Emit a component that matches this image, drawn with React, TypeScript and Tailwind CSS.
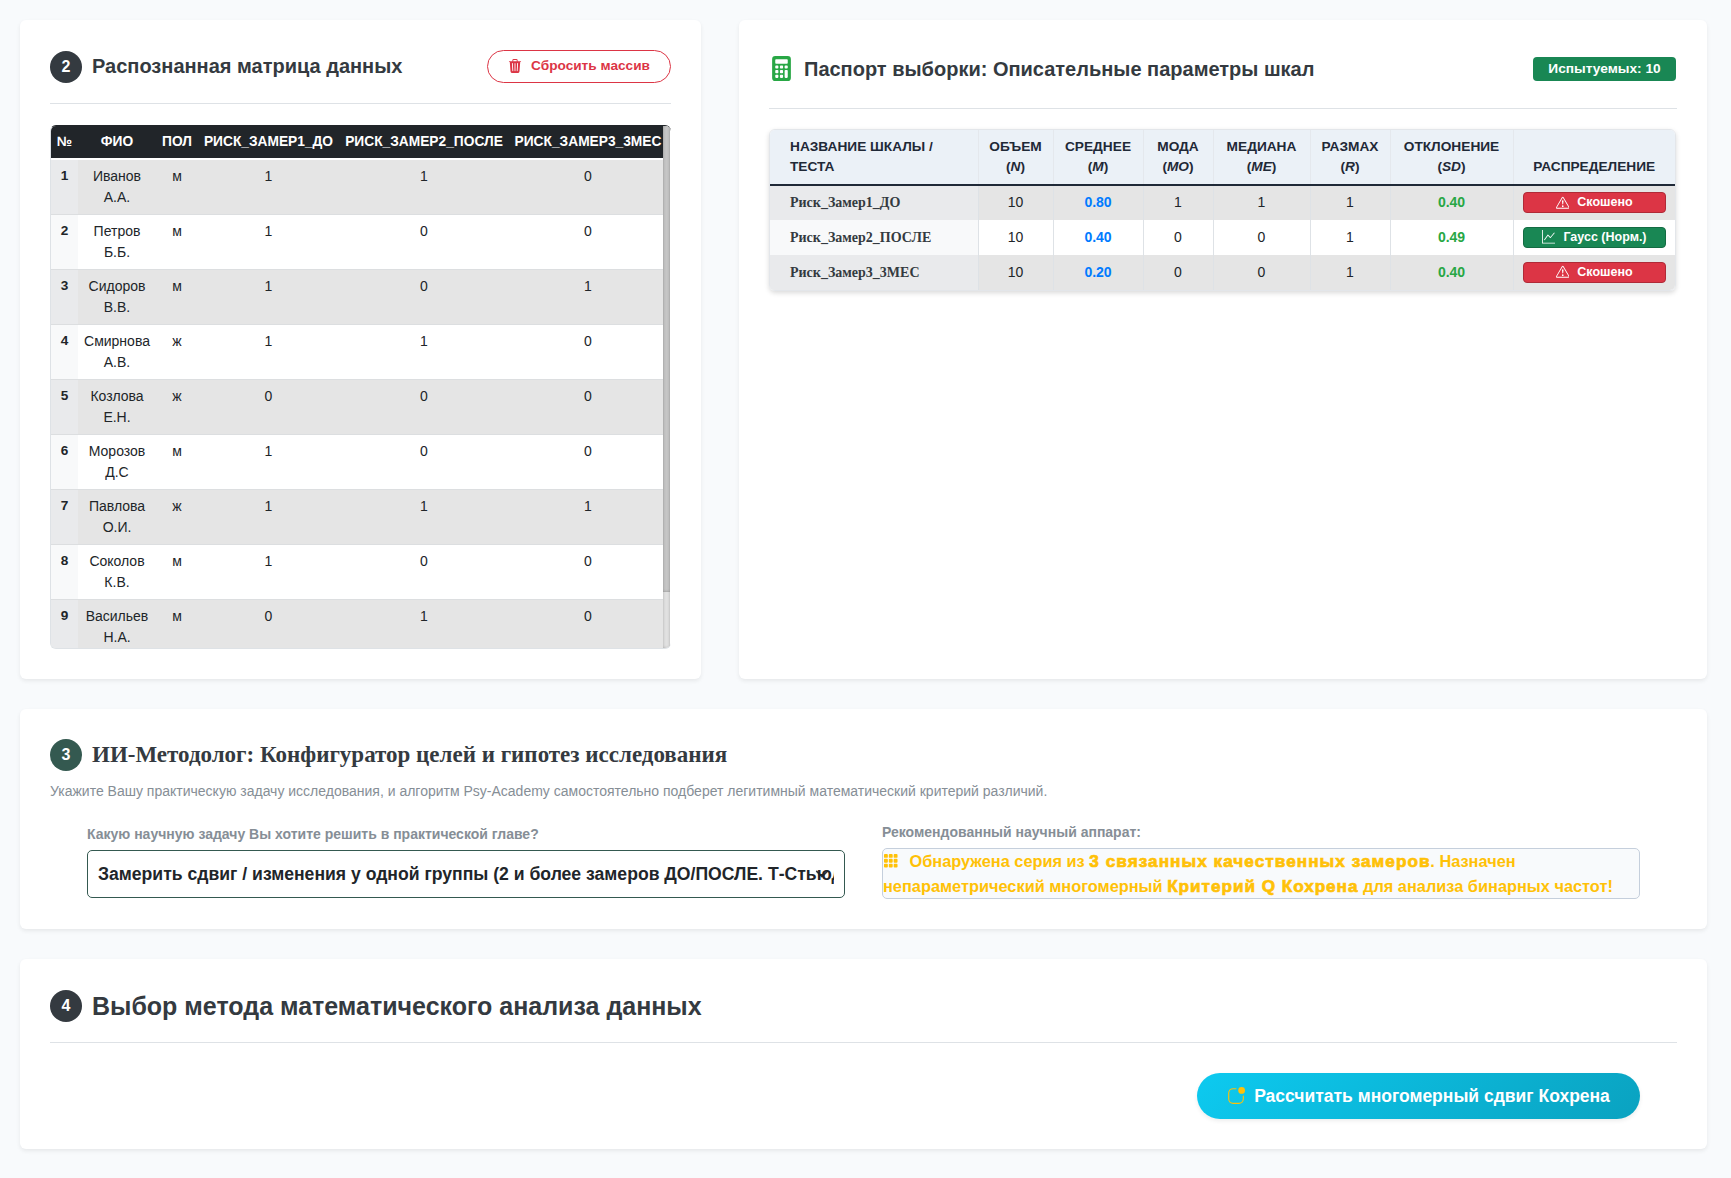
import type { ReactNode } from 'react';
import {
  BsAppIndicator,
  BsCalculatorFill,
  BsExclamationTriangle,
  BsGraphUp,
  BsGrid3X3GapFill,
  BsTrash3Fill,
} from 'react-icons/bs';

const people: [string, string, string, number, number, number][] = [
  ['Иванов', 'А.А.', 'м', 1, 1, 0],
  ['Петров', 'Б.Б.', 'м', 1, 0, 0],
  ['Сидоров', 'В.В.', 'м', 1, 0, 1],
  ['Смирнова', 'А.В.', 'ж', 1, 1, 0],
  ['Козлова', 'Е.Н.', 'ж', 0, 0, 0],
  ['Морозов', 'Д.С', 'м', 1, 0, 0],
  ['Павлова', 'О.И.', 'ж', 1, 1, 1],
  ['Соколов', 'К.В.', 'м', 1, 0, 0],
  ['Васильев', 'Н.А.', 'м', 0, 1, 0],
];

const scales = [
  { name: 'Риск_Замер1_ДО', mean: '0.80', mode: 1, median: 1, sd: '0.40', normal: false },
  { name: 'Риск_Замер2_ПОСЛЕ', mean: '0.40', mode: 0, median: 0, sd: '0.49', normal: true },
  { name: 'Риск_Замер3_3МЕС', mean: '0.20', mode: 0, median: 0, sd: '0.40', normal: false },
];

const statHeads = [
  ['ОБЪЕМ', 'N'],
  ['СРЕДНЕЕ', 'M'],
  ['МОДА', 'MO'],
  ['МЕДИАНА', 'ME'],
  ['РАЗМАХ', 'R'],
  ['ОТКЛОНЕНИЕ', 'SD'],
];

function Card({ className, children }: { className: string; children: ReactNode }) {
  return (
    <section className={`rounded-md bg-white px-[30px] shadow-[0_2px_4px_rgba(0,0,0,0.075)] ${className}`}>
      {children}
    </section>
  );
}

function Step({ n, className = 'bg-[#343a40]' }: { n: number; className?: string }) {
  return (
    <span
      className={`mr-[10px] flex size-8 shrink-0 items-center justify-center rounded-full text-base font-bold text-white ${className}`}
    >
      {n}
    </span>
  );
}

function MatrixCard() {
  return (
    <Card className="h-[659px] w-[681px] pt-[30px]">
      <header className="flex h-[54px] items-start justify-between border-b border-[#dee2e6]">
        <div className="flex h-[33px] items-center">
          <Step n={2} />
          <h2 className="pb-[2px] text-[20px] font-bold text-[#343a40]">Распознанная матрица данных</h2>
        </div>
        <button className="flex h-[33px] w-[184px] items-center justify-center rounded-full border border-[#dc3545] pb-px text-[13.65px] font-bold whitespace-nowrap text-[#dc3545]">
          <BsTrash3Fill className="mr-[9px] size-[14px]" />
          Сбросить массив
        </button>
      </header>
      <div className="mt-[21px] flex h-[524px] overflow-hidden rounded-md border border-r-0 border-[#dee2e6] border-t-[#212529]">
        <div className="w-[612px] overflow-hidden">
          <table className="w-[616px] table-fixed border-collapse text-center text-[14px] text-[#212529]">
            <colgroup>
              <col className="w-[27px]" />
              <col className="w-[78px]" />
              <col className="w-[42px]" />
              <col className="w-[141px]" />
              <col className="w-[170px]" />
              <col className="w-[158px]" />
            </colgroup>
            <thead>
              <tr className="h-[32px] bg-[#212529] text-[13.75px] font-bold text-white">
                <td>№</td>
                <td>ФИО</td>
                <td>ПОЛ</td>
                <td>РИСК_ЗАМЕР1_ДО</td>
                <td>РИСК_ЗАМЕР2_ПОСЛЕ</td>
                <td>РИСК_ЗАМЕР3_3МЕС</td>
              </tr>
              <tr className="h-0.5">
                <td colSpan={6} className="h-0.5 p-0" />
              </tr>
            </thead>
            <tbody>
              {people.map(([last, initials, sex, a, b, c], i) => (
                <tr
                  key={last}
                  className="h-[55px] border-b border-[#dcdee0] align-top leading-[21px] first:h-[54px] odd:bg-[#e5e5e5]"
                >
                  <td className={`pt-[5px] text-[13.6px] font-bold ${i % 2 ? 'bg-[#f8f9fa]' : 'bg-[#e9eaec]'}`}>
                    {i + 1}
                  </td>
                  <td className="pt-[6px]">
                    {last}
                    <br />
                    {initials}
                  </td>
                  <td className="pt-[6px]">{sex}</td>
                  <td className="pt-[6px]">{a}</td>
                  <td className="pt-[6px]">{b}</td>
                  <td className="pt-[6px]">{c}</td>
                </tr>
              ))}
            </tbody>
          </table>
        </div>
        <div className="-mt-px h-[523px] w-[7px] bg-[#e1e1e1] shadow-[inset_0_0_3px_rgba(0,0,0,0.25)]">
          <div className="h-[467px] bg-[#c6c6c6] shadow-[inset_0_0_3px_rgba(0,0,0,0.3)]" />
        </div>
      </div>
    </Card>
  );
}

function Verdict({ normal }: { normal: boolean }) {
  return normal ? (
    <span className="mx-auto flex h-[21px] w-[143px] items-center justify-center rounded border border-[#146c43] bg-[#198754] text-[12.5px] font-bold text-white">
      <BsGraphUp className="mr-2 size-[13.5px]" />
      Гаусс (Норм.)
    </span>
  ) : (
    <span className="mx-auto flex h-[21px] w-[143px] items-center justify-center rounded border border-[#b02a37] bg-[#dc3545] text-[12.5px] font-bold text-white">
      <BsExclamationTriangle className="mr-2 size-[13.5px]" />
      Скошено
    </span>
  );
}

function PassportCard() {
  return (
    <Card className="h-[659px] w-[968px] pt-[30px]">
      <header className="flex h-[59px] items-start justify-between border-b border-[#dee2e6] pt-[3px]">
        <div className="flex h-[31px] items-center">
          <BsCalculatorFill className="mr-[10px] size-[25px] text-[#28a745]" />
          <h2 className="text-[20px] font-bold text-[#343a40]">Паспорт выборки: Описательные параметры шкал</h2>
        </div>
        <span className="mt-[4px] mr-px flex h-6 w-[143px] items-center justify-center rounded bg-[#198754] text-[13.7px] font-bold text-white">
          Испытуемых: 10
        </span>
      </header>
      <div className="mt-[20px] h-[162px] w-[907px] overflow-hidden rounded-md border border-[#e3e6ea] shadow-[0_2px_5px_rgba(0,0,0,0.15)]">
        <table className="w-[905px] table-fixed border-collapse text-center text-[14px] text-[#212529]">
          <colgroup>
            <col className="w-[208px]" />
            <col className="w-[75px]" />
            <col className="w-[90px]" />
            <col className="w-[70px]" />
            <col className="w-[97px]" />
            <col className="w-[80px]" />
            <col className="w-[123px]" />
            <col className="w-[162px]" />
          </colgroup>
          <thead>
            <tr className="h-[55px] border-b-2 border-[#1f2937] bg-[#ebf1f7] align-bottom text-[13.7px] leading-5 font-bold text-[#1f2937]">
              <td className="border-r border-r-[#e4e8ed] pb-[7px] pl-5 text-left">
                НАЗВАНИЕ ШКАЛЫ /
                <br />
                ТЕСТА
              </td>
              {statHeads.map(([label, symbol]) => (
                <td key={label} className="border-r border-r-[#e4e8ed] pb-[7px]">
                  {label}
                  <br />(<i>{symbol}</i>)
                </td>
              ))}
              <td className="pb-[7px]">РАСПРЕДЕЛЕНИЕ</td>
            </tr>
          </thead>
          <tbody>
            {scales.map((s, i) => (
              <tr
                key={s.name}
                className="h-[35px] odd:bg-[#e5e5e5] [&>td]:border-r [&>td]:border-[#dee2e6] [&>td]:pb-px [&>td]:last:border-r-0"
              >
                <td
                  className={`pl-5 text-left font-['Liberation_Serif',serif] font-bold text-[#343a40] ${i % 2 ? 'bg-[#f8f9fa]' : 'bg-[#e9eaec]'}`}
                >
                  {s.name}
                </td>
                <td>10</td>
                <td className="font-bold text-[#007bff]">{s.mean}</td>
                <td>{s.mode}</td>
                <td>{s.median}</td>
                <td>1</td>
                <td className="font-bold text-[#28a745]">{s.sd}</td>
                <td>
                  <Verdict normal={s.normal} />
                </td>
              </tr>
            ))}
          </tbody>
        </table>
      </div>
    </Card>
  );
}

function MethodCard() {
  return (
    <Card className="h-[220px] w-[1687px] pt-[29px]">
      <div className="flex h-[33px] items-center">
        <Step n={3} className="bg-[#345950]" />
        <h2 className="pt-[2px] font-['Liberation_Serif',serif] text-[23px] font-bold text-[#343a40]">
          ИИ-Методолог: Конфигуратор целей и гипотез исследования
        </h2>
      </div>
      <p className="mt-[10px] text-[14px] leading-[21px] text-[#868e96]">
        Укажите Вашу практическую задачу исследования, и алгоритм Psy-Academy самостоятельно подберет легитимный
        математический критерий различий.
      </p>
      <div className="flex gap-[37px] px-[37px]">
        <div className="w-[758px]">
          <label className="mt-[22px] block text-[14px] leading-[21px] font-bold text-[#868e96]">
            Какую научную задачу Вы хотите решить в практической главе?
          </label>
          <div className="relative mt-[5px] flex h-[48px] items-center rounded-[5px] border border-[#345950] px-[10px]">
            <svg viewBox="0 0 16 16" className="absolute top-[16px] right-[15px] size-[14px]" fill="none">
              <path d="m2 5 6 6 6-6" stroke="#343a40" strokeWidth="2" strokeLinecap="round" strokeLinejoin="round" />
            </svg>
            <span className="relative overflow-hidden text-[17.6px] font-bold whitespace-nowrap text-[#212529]">
              Замерить сдвиг / изменения у одной группы (2 и более замеров ДО/ПОСЛЕ. Т-Стьюд
            </span>
          </div>
        </div>
        <div className="w-[758px]">
          <div className="mt-[20px] text-[14px] leading-[21px] font-bold text-[#868e96]">
            Рекомендованный научный аппарат:
          </div>
          <div className="mt-[5px] h-[51px] rounded-[5px] border border-[#c5cfdc] bg-[#f8fafc] text-[16.35px] leading-[25px] font-bold whitespace-nowrap text-[#ffc107]">
            <BsGrid3X3GapFill className="mr-[11px] inline size-[15.5px] align-[-1.5px]" />
            Обнаружена серия из{' '}
            <b className="inline-block w-[341px] text-[17.2px] leading-none tracking-[1.03px] [-webkit-text-stroke:0.7px_#ffc107]">
              3 связанных качественных замеров
            </b>
            . Назначен
            <br />
            непараметрический многомерный{' '}
            <b className="text-[17.2px] leading-none tracking-[0.95px] [-webkit-text-stroke:0.7px_#ffc107]">
              Критерий Q Кохрена
            </b>{' '}
            для анализа бинарных частот!
          </div>
        </div>
      </div>
    </Card>
  );
}

function AnalysisCard() {
  return (
    <Card className="h-[190px] w-[1687px] pt-[30px]">
      <header className="h-[54px] border-b border-[#dee2e6]">
        <div className="flex h-[33px] items-center">
          <Step n={4} />
          <h2 className="pt-[2px] text-[25px] font-bold text-[#343a40]">
            Выбор метода математического анализа данных
          </h2>
        </div>
      </header>
      <div className="mt-[30px] flex justify-end pr-[37px]">
        <button className="flex h-[46px] w-[443px] items-center justify-center rounded-full bg-linear-135 from-[#0dcaf0] to-[#0aa2c0] text-[17.5px] font-bold whitespace-nowrap text-white shadow-[0_2px_4px_rgba(0,0,0,0.075)]">
          <BsAppIndicator className="mr-[9px] size-[18px] text-[#ffc107]" />
          Рассчитать многомерный сдвиг Кохрена
        </button>
      </div>
    </Card>
  );
}

export default function App() {
  return (
    <main className="flex h-[1178px] w-[1731px] flex-col gap-[30px] bg-[#f8fafc] pt-5 pl-5 font-['Liberation_Sans',Arial,sans-serif]">
      <div className="flex gap-[38px]">
        <MatrixCard />
        <PassportCard />
      </div>
      <MethodCard />
      <AnalysisCard />
    </main>
  );
}
